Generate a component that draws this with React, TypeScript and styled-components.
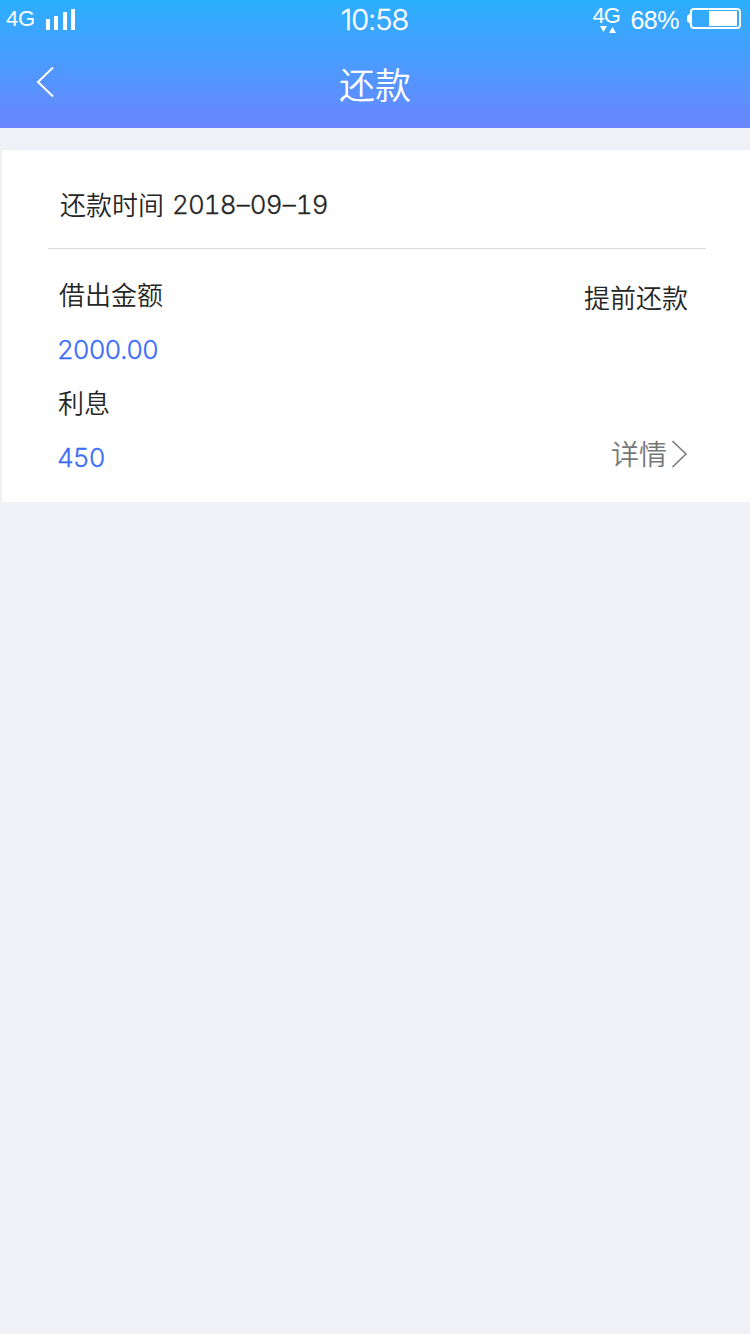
import React from "react";
import styled, { createGlobalStyle } from "styled-components";

const GlobalStyle = createGlobalStyle`
  * { box-sizing: border-box; }
  body {
    margin: 0;
    background: #f0f1f6;
    font-family: Inter, "Noto Sans CJK SC", sans-serif;
  }
`;

const Screen = styled.main`
  min-height: 1334px;
  width: 750px;
`;

const Header = styled.header`
  height: 128px;
  color: #fff;
  background: linear-gradient(180deg, #2bafff 0%, #6b86ff 100%);
`;

const StatusBar = styled.div`
  height: 40px;
  display: grid;
  grid-template-columns: 1fr auto 1fr;
`;

const StatusSide = styled.div<{ $end?: boolean }>`
  display: flex;
  align-items: flex-start;
  justify-content: ${(p) => (p.$end ? "flex-end" : "flex-start")};
  padding: ${(p) => (p.$end ? "0 8px 0 0" : "0 0 0 6px")};
`;

const StatusText = styled.span<{ $size: number; $top: number; $track: number }>`
  font-family: "Liberation Sans", sans-serif;
  font-size: ${(p) => p.$size}px;
  line-height: 24px;
  margin-top: ${(p) => p.$top}px;
  letter-spacing: ${(p) => p.$track}px;
  white-space: nowrap;
`;

const Clock = styled(StatusText)`
  font-family: Inter, sans-serif;
  font-weight: 300;
  -webkit-text-stroke: 0.3px currentColor;
  margin-right: 1px;
`;

const SignalIcon = styled.svg`
  margin: 9px 0 0 11px;
`;

const Network = styled.div`
  width: 38px;
  height: 36px;
  display: flex;
  flex-direction: column;
`;

const TrafficIcon = styled.svg`
  margin: -2px 0 0 8px;
`;

const BatteryIcon = styled.svg`
  margin: 8px 0 0 8px;
`;

const NavBar = styled.nav`
  height: 88px;
  display: grid;
  grid-template-columns: 90px 1fr 90px;
`;

const BackButton = styled.button`
  align-self: start;
  border: 0;
  padding: 26px 0 0 35px;
  background: none;
  text-align: left;
  line-height: 0;
`;

const Title = styled.h1`
  margin: 0;
  padding-top: 2px;
  font-size: 36px;
  font-weight: 350;
  line-height: 88px;
  text-align: center;
`;

const Card = styled.section`
  margin: 22px 0 0 2px;
  height: 352px;
  padding: 0 44px 0 46px;
  background: #fff;
`;

const CardHead = styled.div`
  height: 99px;
  padding: 36px 0 0 12px;
  display: flex;
  gap: 8px;
  border-bottom: 1px solid #dcdcdc;
`;

const CardBody = styled.div`
  padding: 27px 18px 0 10px;
  display: flex;
  justify-content: space-between;
`;

const Column = styled.div<{ $end?: boolean }>`
  display: flex;
  flex-direction: column;
  align-items: ${(p) => (p.$end ? "flex-end" : "flex-start")};
`;

const Label = styled.span<{ $indent?: number }>`
  color: #262626;
  font-size: 26px;
  font-weight: 350;
  line-height: 40px;
  margin-left: ${(p) => p.$indent ?? 0}px;
`;

const Digits = styled.span`
  color: #262626;
  font-size: 26px;
  font-weight: 300;
  line-height: 38px;
  font-feature-settings: "tnum";
  letter-spacing: -0.9px;
  -webkit-text-stroke: 0.3px currentColor;
`;

const Dash = styled.span`
  padding: 0 1px;
`;

const Amount = styled(Digits)`
  color: #3b6cfb;
  line-height: 40px;
  letter-spacing: -1px;
  margin: 14px 0 14px -1px;
`;

const EarlyRepay = styled(Label)`
  margin-top: 3px;
`;

const DetailLink = styled.a`
  margin-top: 116px;
  display: flex;
  align-items: center;
  gap: 4px;
  color: #777;
  font-size: 28px;
  font-weight: 350;
  line-height: 40px;
`;

const DetailArrow = styled.svg`
  margin-bottom: 2px;
`;

export default function App() {
  return (
    <Screen>
      <GlobalStyle />
      <Header>
        <StatusBar>
          <StatusSide>
            <StatusText $size={22} $top={7} $track={-0.3}>4G</StatusText>
            <SignalIcon width="30" height="21" fill="#fff">
              <rect x="0" y="10" width="4" height="11" />
              <rect x="8" y="7" width="4" height="14" />
              <rect x="17" y="3" width="4" height="18" />
              <rect x="25" y="0" width="4" height="21" />
            </SignalIcon>
          </StatusSide>
          <Clock $size={29} $top={8} $track={-1}>10:58</Clock>
          <StatusSide $end>
            <Network>
              <StatusText $size={22} $top={4} $track={-0.9}>4G</StatusText>
              <TrafficIcon width="18" height="8" fill="#fff">
                <path d="M0 0h7L3.5 6Z" />
                <path d="M9 7h7L12.500 1Z" />
              </TrafficIcon>
            </Network>
            <StatusText $size={25} $top={8} $track={-0.5}>68%</StatusText>
            <BatteryIcon width="55" height="21" fill="none">
              <path d="M4 5v11C2 16 2 14 0 13.500V8C2 7 2 5 4 5Z" fill="#fff" />
              <rect x="4" y="1" width="49" height="19" rx="3" stroke="#fff" strokeWidth="2" />
              <rect x="22" y="3" width="28" height="15" fill="#fff" />
            </BatteryIcon>
          </StatusSide>
        </StatusBar>
        <NavBar>
          <BackButton aria-label="返回">
            <svg width="20" height="32" fill="none" stroke="#fff" strokeWidth="2">
              <path d="M18 1.500L3 16L18 30.500" />
            </svg>
          </BackButton>
          <Title>还款</Title>
        </NavBar>
      </Header>
      <Card>
        <CardHead>
          <Label>还款时间</Label>
          <Digits>
            2018<Dash>–</Dash>09<Dash>–</Dash>19
          </Digits>
        </CardHead>
        <CardBody>
          <Column>
            <Label $indent={1}>借出金额</Label>
            <Amount>2000.00</Amount>
            <Label>利息</Label>
            <Amount>450</Amount>
          </Column>
          <Column $end>
            <EarlyRepay>提前还款</EarlyRepay>
            <DetailLink>
              详情
              <DetailArrow width="17" height="28" fill="none" stroke="#777" strokeWidth="1.500">
                <path d="M1.500 1L15 14L1.500 27" />
              </DetailArrow>
            </DetailLink>
          </Column>
        </CardBody>
      </Card>
    </Screen>
  );
}
